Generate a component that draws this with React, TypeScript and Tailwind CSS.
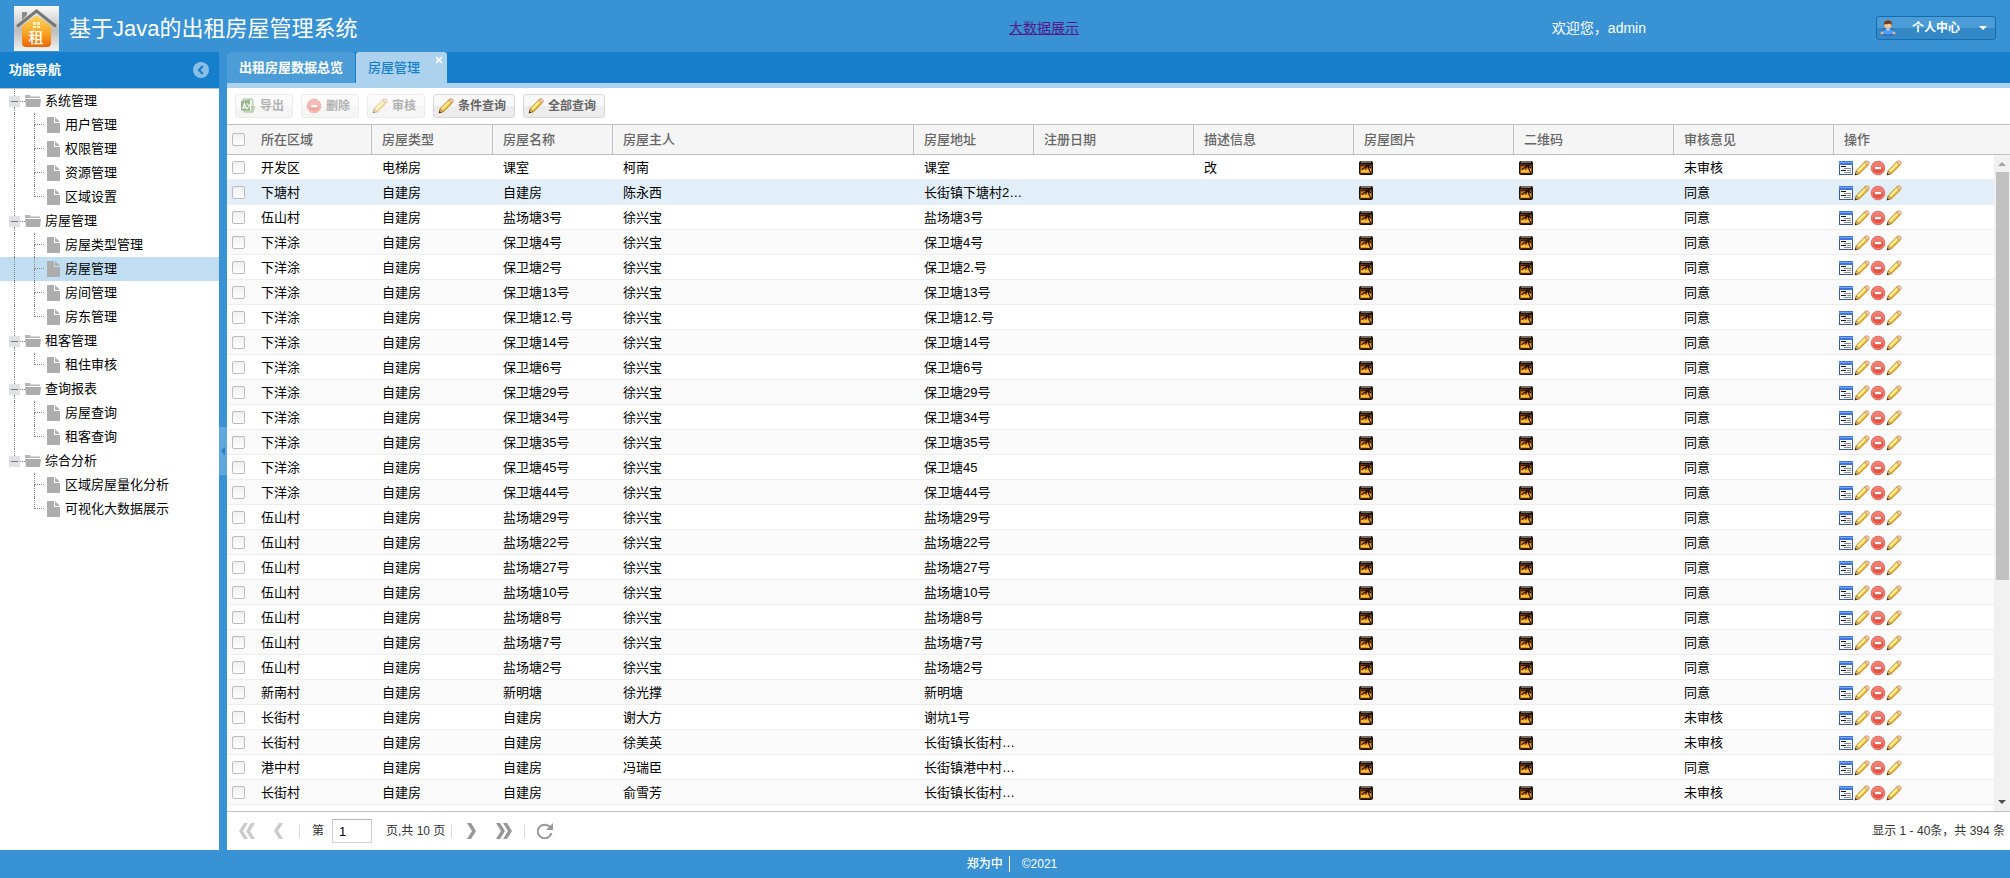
import React from 'react';

const FONT = "font-['Liberation_Sans','Noto_Sans_CJK_SC',sans-serif]";

const tree = [
  { label: '系统管理', children: ['用户管理', '权限管理', '资源管理', '区域设置'] },
  { label: '房屋管理', children: ['房屋类型管理', '房屋管理', '房间管理', '房东管理'] },
  { label: '租客管理', children: ['租住审核'] },
  { label: '查询报表', children: ['房屋查询', '租客查询'] },
  { label: '综合分析', children: ['区域房屋量化分析', '可视化大数据展示'] },
];

// area, type, name, owner, address, remark, opinion
const rows = [
  ['开发区', '电梯房', '课室', '柯南', '课室', '改', '未审核'],
  ['下塘村', '自建房', '自建房', '陈永西', '长街镇下塘村2…', '', '同意'],
  ['伍山村', '自建房', '盐场塘3号', '徐兴宝', '盐场塘3号', '', '同意'],
  ['下洋涂', '自建房', '保卫塘4号', '徐兴宝', '保卫塘4号', '', '同意'],
  ['下洋涂', '自建房', '保卫塘2号', '徐兴宝', '保卫塘2.号', '', '同意'],
  ['下洋涂', '自建房', '保卫塘13号', '徐兴宝', '保卫塘13号', '', '同意'],
  ['下洋涂', '自建房', '保卫塘12.号', '徐兴宝', '保卫塘12.号', '', '同意'],
  ['下洋涂', '自建房', '保卫塘14号', '徐兴宝', '保卫塘14号', '', '同意'],
  ['下洋涂', '自建房', '保卫塘6号', '徐兴宝', '保卫塘6号', '', '同意'],
  ['下洋涂', '自建房', '保卫塘29号', '徐兴宝', '保卫塘29号', '', '同意'],
  ['下洋涂', '自建房', '保卫塘34号', '徐兴宝', '保卫塘34号', '', '同意'],
  ['下洋涂', '自建房', '保卫塘35号', '徐兴宝', '保卫塘35号', '', '同意'],
  ['下洋涂', '自建房', '保卫塘45号', '徐兴宝', '保卫塘45', '', '同意'],
  ['下洋涂', '自建房', '保卫塘44号', '徐兴宝', '保卫塘44号', '', '同意'],
  ['伍山村', '自建房', '盐场塘29号', '徐兴宝', '盐场塘29号', '', '同意'],
  ['伍山村', '自建房', '盐场塘22号', '徐兴宝', '盐场塘22号', '', '同意'],
  ['伍山村', '自建房', '盐场塘27号', '徐兴宝', '盐场塘27号', '', '同意'],
  ['伍山村', '自建房', '盐场塘10号', '徐兴宝', '盐场塘10号', '', '同意'],
  ['伍山村', '自建房', '盐场塘8号', '徐兴宝', '盐场塘8号', '', '同意'],
  ['伍山村', '自建房', '盐场塘7号', '徐兴宝', '盐场塘7号', '', '同意'],
  ['伍山村', '自建房', '盐场塘2号', '徐兴宝', '盐场塘2号', '', '同意'],
  ['新南村', '自建房', '新明塘', '徐光撑', '新明塘', '', '同意'],
  ['长街村', '自建房', '自建房', '谢大方', '谢坑1号', '', '未审核'],
  ['长街村', '自建房', '自建房', '徐美英', '长街镇长街村…', '', '未审核'],
  ['港中村', '自建房', '自建房', '冯瑞臣', '长街镇港中村…', '', '同意'],
  ['长街村', '自建房', '自建房', '俞雪芳', '长街镇长街村…', '', '未审核'],
];

const headers = [
  '所在区域', '房屋类型', '房屋名称', '房屋主人', '房屋地址', '注册日期',
  '描述信息', '房屋图片', '二维码', '审核意见', '操作',
];

function PencilIcon() {
  return (
    <svg className="w-4 h-4 shrink-0" viewBox="0 0 16 16" aria-hidden="true">
      <path d="M1.2 14.8 2.3 10.5 10.6 2 14 5.4 5.5 13.7Z" fill="#f9d650" stroke="#b9852a" strokeWidth=".9" />
      <path d="M3.8 11.2 11.2 3.8" stroke="#fdf3b0" strokeWidth="1.6" />
      <path d="M5.3 12.8 12.9 5.2" stroke="#e0a52c" />
      <path d="M10.6 2 12 .9 13.8 1 15.1 2.4 15 4.1 14 5.4Z" fill="#f8d2b0" stroke="#c07f4c" strokeWidth=".8" />
      <path d="M1.2 14.8 2.4 10.8 5.2 13.6Z" fill="#e8c88c" stroke="#8a5a18" strokeWidth=".6" />
      <path d="M.8 15.2 1.5 12.8 3.2 14.5Z" fill="#3a2a10" />
    </svg>
  );
}

function DeleteIcon() {
  return (
    <svg className="w-4 h-4 shrink-0" viewBox="0 0 16 16" aria-hidden="true">
      <circle cx="8" cy="8" r="6.8" fill="#e8503f" stroke="#dc6a62" />
      <path d="M2.2 7.5a5.8 5.4 0 0 1 11.6 0Z" fill="#f28a80" opacity=".7" />
      <circle cx="8" cy="8" r="5.8" fill="none" stroke="#f4978e" strokeWidth=".7" />
      <rect x="4.500" y="6.500" width="7" height="3" rx=".5" fill="#fff" stroke="#d63f34" strokeWidth=".5" />
    </svg>
  );
}

function FormIcon() {
  return (
    <svg className="w-4 h-4 shrink-0" viewBox="0 0 16 16" aria-hidden="true">
      <rect x="1.5" y="1.5" width="13" height="13" fill="#f4f8fc" stroke="#3c5a94" />
      <rect x="1" y="1" width="14" height="4" fill="#3d74dc" />
      <path d="M1 2.500h14" stroke="#7ba6f5" />
      <path d="M3 6.500h5M3 10.500h5" stroke="#111" />
      <path d="M6 8.500h7M9 10.500h4M6 12.500h7" stroke="#8a8a8a" />
    </svg>
  );
}

function PictureIcon() {
  return (
    <svg className="w-4 h-4 block" viewBox="0 0 16 16" aria-hidden="true">
      <defs>
        <linearGradient id="sunset" x2="0" y2="1">
          <stop stopColor="#7a3208" />
          <stop offset=".5" stopColor="#f5921c" />
          <stop offset=".75" stopColor="#fdc63c" />
          <stop offset="1" stopColor="#c9560c" />
        </linearGradient>
      </defs>
      <rect x="1" y="1" width="14" height="14" rx="2" fill="#17110d" />
      <path d="M3 2h10" stroke="#b5aca0" strokeWidth="1.2" />
      <rect x="2.500" y="4" width="11" height="10" fill="url(#sunset)" />
      <path d="M3 5.500 8.500 5 13.500 4.500M10 5 7.500 7 3.500 9.800M10 5 8 8.500 7.500 9.500M10 5 12.800 8M10 5 11 9.500 13 13.500" fill="none" stroke="#1c0f08" strokeWidth="1.1" />
      <path d="M2.500 13.500h11" stroke="#4a1d08" />
    </svg>
  );
}

function ExcelIcon() {
  return (
    <svg className="w-4 h-4 shrink-0" viewBox="0 0 16 16" aria-hidden="true">
      <path d="M3 1h9l1 2v11H4Z" fill="#dbe8d0" stroke="#4d7a35" />
      <path d="M1 3 10 1.500V13L1 12.500Z" fill="#39701f" />
      <path d="m2.500 11 2-5.500 2 5.500M3.500 9.500h2M7 5.500l4.500 5.500M11 5.500 7 11" stroke="#fff" strokeWidth="1.1" fill="none" />
      <path d="M11 8h4.500l-1.500 4.500-3 2.500Z" fill="#7ea665" />
    </svg>
  );
}

function UserIcon() {
  return (
    <svg className="w-4 h-4 shrink-0" viewBox="0 0 16 16" aria-hidden="true">
      <path d="M1.5 14c0-3.500 2-5.500 6.500-5.500s6.500 2 6.500 5.500c-3 1.600-10 1.600-13 0Z" fill="#4d9cf5" stroke="#2355a8" />
      <path d="M5.5 8.5 8 11l2.5-2.5Z" fill="#c8e2ff" />
      <circle cx="2" cy="13" r="1.4" fill="#f3b887" />
      <circle cx="14" cy="13" r="1.4" fill="#f3b887" />
      <circle cx="8" cy="5" r="3.6" fill="#f5c49a" />
      <path d="M4 5C3.5 1.8 5.5.6 8 .6S12.5 1.8 12 5c-1-.2-1.5-1-2-1.5C8.5 4.5 6 4.3 5 4Z" fill="#7a3c10" />
    </svg>
  );
}

function Logo() {
  return (
    <svg className="w-[45px] h-[45px] shrink-0" viewBox="0 0 45 45" role="img" aria-label="租">
      <defs>
        <linearGradient id="logoBg" x2="0" y2="1">
          <stop stopColor="#fbfbfb" />
          <stop offset=".55" stopColor="#bdbdbd" />
          <stop offset="1" stopColor="#f2f2f2" />
        </linearGradient>
        <linearGradient id="logoHouse" x2="0" y2="1">
          <stop stopColor="#ffd860" />
          <stop offset=".6" stopColor="#f9a01f" />
          <stop offset="1" stopColor="#ea6406" />
        </linearGradient>
      </defs>
      <rect width="45" height="45" fill="url(#logoBg)" />
      <path d="M8 6h5v3l-5 5Z" fill="#8c8c8c" />
      <path d="M22.5 9 37 20v17q0 4-4 4H12q-4 0-4-4V20Z" fill="url(#logoHouse)" />
      <path d="M3 20.500 22.500 5 42 20.500" fill="none" stroke="#777" strokeWidth="3" />
      <path d="M19 16h3v3h-3zM23 16h3v3h-3zM19 20h3v2h-3zM23 20h3v2h-3z" fill="#fff3c8" />
      <text x="22" y="37" textAnchor="middle" fontSize="15" fontWeight="500" fill="#fff">租</text>
    </svg>
  );
}

function Check({ label }: { label: string }) {
  return (
    <input
      type="checkbox"
      aria-label={label}
      className="block appearance-none w-[13px] h-[13px] ml-[5px] rounded-xs border border-[#bcbcbc] bg-gradient-to-b from-[#f0f0f0] to-white"
    />
  );
}

function ToolButton({ icon, label, disabled = false }: { icon: React.ReactNode; label: string; disabled?: boolean }) {
  return (
    <button
      type="button"
      disabled={disabled}
      className="flex items-center gap-1 h-6 pl-1 pr-2 rounded-[3px] border border-[#d8d8d8] bg-gradient-to-b from-[#f8f8f8] from-50% to-[#ececec] to-50% text-xs font-bold text-[#666] disabled:opacity-50"
    >
      {icon}
      {label}
    </button>
  );
}

function TreeLeaf({ label, last, selected, trunk }: { label: string; last: boolean; selected: boolean; trunk: boolean }) {
  return (
    <li className={selected ? 'bg-[#c1ddf1]' : ''}>
      <a href="#" className="flex items-center h-6 pl-[14px] text-[13px] text-black">
        <span className={`w-5 h-6 border-l border-dotted ${trunk ? 'border-[#888]' : 'border-transparent'}`} />
        <span className="w-[10px] h-6">
          <span className="block h-3 border-l border-b border-dotted border-[#888]" />
          <span className={`block h-3 border-l border-dotted ${last ? 'border-transparent' : 'border-[#888]'}`} />
        </span>
        <svg className="w-[13px] h-4 ml-[3px] mr-[5px]" viewBox="0 0 13 16" aria-hidden="true">
          <path d="M0 0h7v6h6v10H0Z" fill="#adadad" />
          <path d="M8 0 13 5H8Z" fill="#adadad" />
        </svg>
        {label}
      </a>
    </li>
  );
}

function Sidebar() {
  return (
    <aside className="w-[219px] shrink-0 flex flex-col bg-white">
      <div className="h-[37px] flex items-center justify-between pl-[9px] pr-[10px] bg-[#157fcc] border-b border-[#c0c0c0] text-white">
        <h2 className="text-[13px] font-bold">功能导航</h2>
        <button type="button" aria-label="收起" className="w-4 h-4 rounded-full bg-[#8abfe5] flex items-center justify-center">
          <svg className="w-4 h-4" viewBox="0 0 16 16">
            <path d="M9.8 4 6 8l3.8 4" fill="none" stroke="#157fcc" strokeWidth="2.2" />
          </svg>
        </button>
      </div>
      <ul>
        {tree.map((group, g) => {
          const lastGroup = g === tree.length - 1;
          return (
            <li key={group.label}>
              <div className="flex items-center h-6 pl-[9px] text-[13px] text-black">
                <span className="w-[11px] h-6 flex flex-col items-center">
                  <span className="h-[7px] border-l border-dotted border-[#888]" />
                  <button type="button" aria-label={`折叠 ${group.label}`} className="w-[11px] h-[11px] bg-[#dfe1e5] flex items-center justify-center">
                    <span className="w-[7px] h-px bg-[#777]" />
                  </button>
                  <span className={`h-1.5 border-l border-dotted ${lastGroup ? 'border-transparent' : 'border-[#888]'}`} />
                </span>
                <span className="w-[5px] h-px border-t border-dotted border-[#888]" />
                <svg className="w-4 h-3 mr-1" viewBox="0 0 16 12" aria-hidden="true">
                  <path d="M0 0h5l1 1.5h9V3H0Z" fill="#b5b5b5" />
                  <path d="M0 4h16l-1 8H1Z" fill="#adadad" />
                </svg>
                {group.label}
              </div>
              <ul>
                {group.children.map((label, i) => (
                  <TreeLeaf
                    key={label}
                    label={label}
                    last={i === group.children.length - 1}
                    selected={g === 1 && i === 1}
                    trunk={!lastGroup}
                  />
                ))}
              </ul>
            </li>
          );
        })}
      </ul>
    </aside>
  );
}

function HouseTable() {
  return (
    <table className="w-full table-fixed border-collapse text-[13px] text-left">
      <colgroup>
        <col className="w-6" />
        <col className="w-[121px]" />
        <col className="w-[121px]" />
        <col className="w-[120px]" />
        <col />
        <col className="w-[120px]" />
        <col className="w-[160px]" />
        <col className="w-[160px]" />
        <col className="w-[160px]" />
        <col className="w-[160px]" />
        <col className="w-[160px]" />
        <col className="w-[176px]" />
      </colgroup>
      <thead>
        <tr className="h-[31px] bg-[#f5f5f5] text-[#666] shadow-[inset_0_1px_0_#c0c0c0,inset_0_-1px_0_#c0c0c0]">
          <th className="p-0"><Check label="全选" /></th>
          {headers.map((h, i) => (
            <th key={h} className={`py-0 px-[10px] font-medium ${i < headers.length - 1 ? 'shadow-[inset_-1px_0_0_#c0c0c0]' : ''}`}>
              {h}
            </th>
          ))}
        </tr>
      </thead>
      <tbody>
        {rows.map(([area, type, name, owner, address, remark, opinion], i) => (
          <tr
            key={i}
            className={`h-[25px] shadow-[inset_0_-1px_0_#ededed] ${i === 1 ? 'bg-[#e2eff8]' : i % 2 ? 'bg-[#fafafa]' : 'bg-white'}`}
          >
            <td className="p-0"><Check label={`选择 ${name}`} /></td>
            <td className="py-0 px-[10px]">{area}</td>
            <td className="py-0 px-[10px]">{type}</td>
            <td className="py-0 px-[10px]">{name}</td>
            <td className="py-0 px-[10px]">{owner}</td>
            <td className="py-0 px-[10px] whitespace-nowrap">{address}</td>
            <td />
            <td className="py-0 px-[10px]">{remark}</td>
            <td className="py-0 px-1"><PictureIcon /></td>
            <td className="py-0 px-1"><PictureIcon /></td>
            <td className="py-0 px-[10px]">{opinion}</td>
            <td className="py-0 px-1">
              <div className="flex">
                <button type="button" aria-label="详情"><FormIcon /></button>
                <button type="button" aria-label="编辑"><PencilIcon /></button>
                <button type="button" aria-label="删除"><DeleteIcon /></button>
                <button type="button" aria-label="审核"><PencilIcon /></button>
              </div>
            </td>
          </tr>
        ))}
      </tbody>
    </table>
  );
}

function Scrollbar() {
  return (
    <div className="absolute right-0 top-[31px] bottom-0 w-4 bg-[#f1f1f1] flex flex-col items-center">
      <svg className="w-4 h-[17px]" viewBox="0 0 16 17"><path d="M4 11h8L8 7Z" fill="#a3a3a3" /></svg>
      <div className="w-[13px] h-[408px] bg-[#c1c1c1]" />
      <svg className="w-4 h-[17px] mt-auto" viewBox="0 0 16 17"><path d="M4 6h8l-4 4Z" fill="#505050" /></svg>
    </div>
  );
}

function PageArrow({ label, double = false, flip = false, dim = false }: { label: string; double?: boolean; flip?: boolean; dim?: boolean }) {
  return (
    <button type="button" aria-label={label} disabled={dim}>
      <svg className={`h-4 ${double ? 'w-4' : 'w-[9px]'} ${flip ? 'rotate-180' : ''}`} viewBox={double ? '0 0 16 16' : '0 0 9 16'}>
        <path d="M0 0h4l5 8-5 8H0l5-8Z" fill={dim ? '#cbcbcb' : '#979797'} />
        {double && <path d="M7 0h4l5 8-5 8H7l5-8Z" fill={dim ? '#cbcbcb' : '#979797'} />}
      </svg>
    </button>
  );
}

function Pager() {
  return (
    <div className="h-[39px] shrink-0 flex items-center pl-3 pr-[5px] border-t border-[#c0c0c0] bg-white text-xs text-[#333]">
      <div className="flex items-center gap-[19px]">
        <PageArrow label="第一页" double flip dim />
        <PageArrow label="上一页" flip dim />
      </div>
      <span className="w-px h-[14px] ml-4 mr-3 bg-[#d8d8d8]" />
      <label htmlFor="page">第</label>
      <input id="page" defaultValue="1" className="w-10 h-6 ml-2 mr-[14px] px-[6px] border border-[#d0d0d0] border-t-[#b8b8b8] text-[13px] text-black" />
      <span>页,共 10 页</span>
      <span className="w-px h-[14px] ml-[6px] mr-[15px] bg-[#d8d8d8]" />
      <div className="flex items-center gap-5">
        <PageArrow label="下一页" />
        <PageArrow label="最后一页" double />
      </div>
      <span className="w-px h-[14px] mx-3 bg-[#d8d8d8]" />
      <button type="button" aria-label="刷新">
        <svg className="w-4 h-4" viewBox="0 0 16 16">
          <path d="M13 4A7 6.8 0 1 0 14.5 10" fill="none" stroke="#979797" strokeWidth="2" />
          <path d="M16 0v7H9Z" fill="#979797" />
        </svg>
      </button>
      <span className="ml-auto">显示 1 - 40条，共 394 条</span>
    </div>
  );
}

export default function App() {
  return (
    <div className={`${FONT} min-h-screen flex flex-col bg-[#3892d4] text-black`}>
      <header className="h-[52px] shrink-0 flex items-center px-[14px] pt-1 text-white">
        <div className="flex-1 flex items-center gap-[10px]">
          <Logo />
          <h1 className="text-[22px]">基于Java的出租房屋管理系统</h1>
        </div>
        <div className="flex-1 flex items-center justify-between pl-2">
          <a href="#" className="text-sm text-[#551a8b] underline">大数据展示</a>
          <div className="flex items-center gap-[230px]">
            <span className="text-sm">欢迎您，admin</span>
            <button type="button" className="w-[120px] h-6 flex items-center pl-[3px] pr-2 rounded-[3px] border border-[#126daf] bg-gradient-to-b from-[#4b9cd7] from-50% to-[#3488c6] to-50% text-xs font-bold">
              <UserIcon />
              <span className="ml-4">个人中心</span>
              <svg className="w-2 h-1 ml-auto" viewBox="0 0 8 4"><path d="M0 0h8L4 4Z" fill="#fff" /></svg>
            </button>
          </div>
        </div>
      </header>

      <div className="flex-1 flex">
        <Sidebar />
        <div className="w-2 shrink-0 flex items-center">
          <button type="button" aria-label="折叠导航" className="w-2 h-12 bg-[#5fa8dd] flex items-center justify-center">
            <svg className="w-1 h-2" viewBox="0 0 4 8"><path d="M4 0v8L0 4Z" fill="#2380c2" /></svg>
          </button>
        </div>
        <main className="flex-1 min-w-0 flex flex-col bg-white">
          <nav className="h-9 shrink-0 flex gap-px bg-[#157fcc] border-b-[5px] border-[#add2ed]">
            <button type="button" className="h-[31px] px-3 rounded-t-[3px] bg-[#4b9cd7] text-[13px] font-bold text-white">出租房屋数据总览</button>
            <button type="button" className="relative h-[31px] pl-3 pr-[27px] rounded-t-[3px] bg-[#add2ed] text-[13px] font-medium text-[#157fcc]">
              房屋管理
              <svg className="absolute right-1 top-1 w-2 h-2" viewBox="0 0 8 8"><path d="m1 1 6 6M7 1 1 7" stroke="#fff" strokeWidth="1.5" /></svg>
            </button>
          </nav>
          <div className="h-9 shrink-0 flex items-center gap-2 px-2">
            <ToolButton icon={<ExcelIcon />} label="导出" disabled />
            <ToolButton icon={<DeleteIcon />} label="删除" disabled />
            <ToolButton icon={<PencilIcon />} label="审核" disabled />
            <ToolButton icon={<PencilIcon />} label="条件查询" />
            <ToolButton icon={<PencilIcon />} label="全部查询" />
          </div>
          <div className="relative flex-1 pb-1.5">
            <HouseTable />
            <Scrollbar />
          </div>
          <Pager />
        </main>
      </div>

      <footer className="h-7 shrink-0 flex items-center justify-center pl-[14px] text-xs font-medium text-white">
        <span className="pr-[6px] mr-3 border-r border-white">郑为中</span>
        <span>©2021</span>
      </footer>
    </div>
  );
}
